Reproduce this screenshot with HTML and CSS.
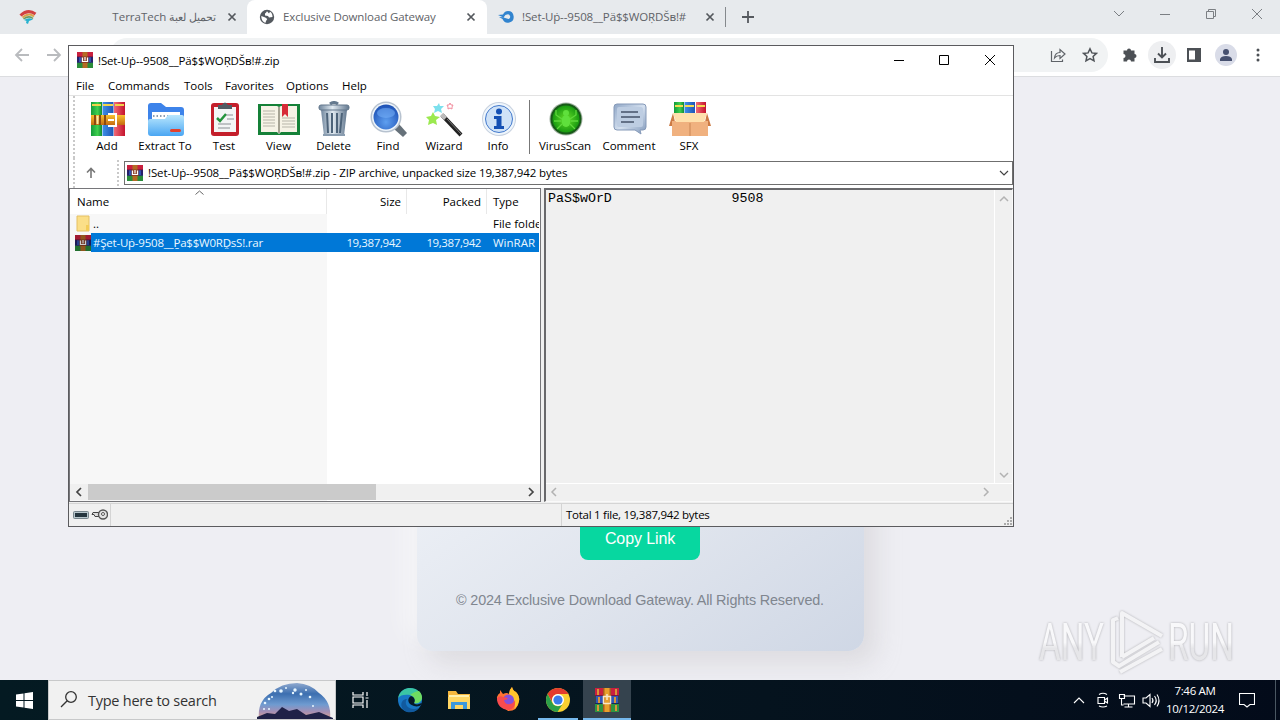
FILE: index.html
```html
<!DOCTYPE html>
<html lang="en">
<head>
    <meta charset="UTF-8">
    <title>Desktop</title>
    <link rel="stylesheet" href="styles.css">
</head>
<body>
    <!-- shared icons -->
    <svg class="defs" width="0" height="0">
        <defs>
            <linearGradient id="gold" x1="0" y1="0" x2="0" y2="1"><stop offset="0" stop-color="#f9c12f"/><stop offset="1" stop-color="#c56a12"/></linearGradient>
            <linearGradient id="folder" x1="0" y1="0" x2="0" y2="1"><stop offset="0" stop-color="#b9e7fd"/><stop offset="1" stop-color="#4aa6f3"/></linearGradient>
            <linearGradient id="steel" x1="0" y1="0" x2="1" y2="0"><stop offset="0" stop-color="#71879e"/><stop offset=".45" stop-color="#e2ebf2"/><stop offset="1" stop-color="#63788f"/></linearGradient>
            <linearGradient id="bubble" x1="0" y1="0" x2="1" y2="1"><stop offset="0" stop-color="#8fa6c6"/><stop offset=".5" stop-color="#d4e0ef"/><stop offset="1" stop-color="#8098ba"/></linearGradient>
            <radialGradient id="lens" cx=".5" cy=".7" r=".7"><stop offset="0" stop-color="#5fa0f0"/><stop offset="1" stop-color="#1b4fb4"/></radialGradient>
            <radialGradient id="green"><stop offset="0" stop-color="#67e02a"/><stop offset="1" stop-color="#189a10"/></radialGradient>
            <linearGradient id="red" x1="0" y1="0" x2="1" y2="0"><stop offset="0" stop-color="#f06a78"/><stop offset="1" stop-color="#c4132c"/></linearGradient>
            <linearGradient id="blue" x1="0" y1="0" x2="1" y2="0"><stop offset="0" stop-color="#3f8fe8"/><stop offset="1" stop-color="#1f55b5"/></linearGradient>
            <linearGradient id="leaf" x1="0" y1="0" x2="1" y2="0"><stop offset="0" stop-color="#139a3a"/><stop offset=".6" stop-color="#3fd04e"/><stop offset="1" stop-color="#138a33"/></linearGradient>
        </defs>
        <symbol id="books" viewBox="0 0 16 16">
            <path fill="#c9203f" d="M0 0h16v5H0z"/>
            <path fill="#2f50b0" d="M0 5h16v5.500H0z"/>
            <path fill="#2a8c3a" d="M0 10.500h16V16H0z"/>
            <path fill="#7a1740" d="M0 4.300h16v1H0z"/>
            <path fill="#182a63" d="M0 10h16v.8H0z"/>
            <path fill="#b46a24" d="M5.500 0h5v16h-5z"/>
            <path fill="#27206a" d="M0 5h2v5H0zM14 5h2v5h-2z"/>
            <path fill="#8b3d22" d="M4.500 4.500h7v6.500h-7z"/>
            <path fill="none" stroke="#fff" stroke-width="1.200" d="M5.500 5.500v4h5v-4M8 5v3.500"/>
        </symbol>
        <symbol id="books-large" viewBox="0 0 24 24">
            <path fill="#c9203f" d="M0 0h24v8H0z"/>
            <path fill="#3157b8" d="M1 8h22v8H1z"/>
            <path fill="#2f9440" d="M0 16h24v8H0z"/>
            <path fill="#7a1740" d="M0 7h24v1H0z"/>
            <path fill="#17265c" d="M0 15h24v1H0z"/>
            <path fill="#d9953a" d="M2 1h2v6H2zM20 1h2v6h-2zM3 9h2v6H3zM19 9h2v6h-2zM2 17h2v6H2zM20 17h2v6h-2z"/>
            <path fill="#a85a1e" d="M8 0h8v24H8z"/>
            <path fill="#e8a02c" d="M9.500 0h5v24h-5z"/>
            <path fill="none" stroke="#f6e6c8" stroke-width="1.500" d="M8.500 8.500h7v7h-7zM12 6v6"/>
        </symbol>
    </svg>

    <div class="desktop">
        <div class="browser">
            <div class="tabstrip">
                <div class="tab tab-first">
                    <svg width="18" height="16" viewBox="0 0 18 16"><path d="M1.500 6.500Q9-.5 16.500 5" fill="none" stroke="#d24141" stroke-width="3"/><path d="M3.500 8.500Q10 3 15 7.500" fill="none" stroke="#dda24a" stroke-width="2"/><path d="M4.500 10Q10 6 14 9.500" fill="none" stroke="#6b9a5c" stroke-width="1.500"/><path d="M5 11q5-3 9-.5L10 12l-1 3-2-1 .5-2z" fill="#27b2cf"/></svg>
                    <span class="tab-title" dir="rtl">تحميل لعبة <span class="latin">TerraTech</span></span>
                    <svg class="tab-close" width="10" height="10" viewBox="0 0 10 10"><path d="M1.500 1.500l7 7m0-7l-7 7"/></svg>
                </div>
                <div class="tab tab-active">
                    <svg width="16" height="16" viewBox="0 0 16 16"><circle cx="8" cy="8" r="7.200" fill="#54595f"/><path d="M2.300 7l4 1.500 2 1.500-1 1.500-1 2.500Q2 12 2.300 7zM8 2.300q-1 2-2 2.200v2l3 .5 1 1.500 3.500-.5Q13.500 4 11 2.800L10 4.500z" fill="#fff"/></svg>
                    <span class="tab-title">Exclusive Download Gateway</span>
                    <svg class="tab-close" width="10" height="10" viewBox="0 0 10 10"><path d="M1.500 1.500l7 7m0-7l-7 7"/></svg>
                </div>
                <div class="tab tab-third">
                    <svg width="16" height="16" viewBox="0 0 16 16"><path fill="#3184cf" fill-rule="evenodd" d="M0 6l5-.5C6 3 8 2 10 2a5.800 5.800 0 1 1-5.500 8L1 8l4 .2zM9 5.500q-2 .2-2.500 1.700L5.500 8.500l5 1.500a2.300 2.300 0 1 0-1.500-4.500z"/></svg>
                    <span class="tab-title">!Set-Uṗ--9508__Pä$$WOṚDŠʙ!#</span>
                    <svg class="tab-close" width="10" height="10" viewBox="0 0 10 10"><path d="M1.500 1.500l7 7m0-7l-7 7"/></svg>
                </div>
                <span class="tab-divider"></span>
                <svg class="new-tab" width="12" height="12" viewBox="0 0 12 12"><path d="M6 0v12M0 6h12" stroke="#55595e" stroke-width="1.800"/></svg>
                <div class="caption">
                    <svg width="12" height="12" viewBox="0 0 12 12"><path d="M1 3l5 5 5-5"/></svg>
                    <svg width="12" height="12" viewBox="0 0 12 12"><path d="M1 6.500h10"/></svg>
                    <svg width="12" height="12" viewBox="0 0 12 12"><path d="M1.500 3.500h7v7h-7zM3.500 3.500v-2h7v7h-2"/></svg>
                    <svg width="12" height="12" viewBox="0 0 12 12"><path d="M1 1l10 10M11 1L1 11"/></svg>
                </div>
            </div>
            <div class="nav">
                <svg class="arrow" width="16" height="16" viewBox="0 0 16 16"><path d="M15 8H2M8 2L2 8l6 6"/></svg>
                <svg class="arrow" width="16" height="16" viewBox="0 0 16 16"><path d="M1 8h13M8 2l6 6-6 6"/></svg>
                <div class="omnibox">
                    <svg width="16" height="16" viewBox="0 0 16 16"><path d="M1.500 4v10.500h11v-2M4.500 11q.5-5.500 5.500-5.500v-3L15 7l-5 4.500V8.500Q6.500 8.500 4.500 11z" fill="none" stroke="#5f6368" stroke-width="1.200"/></svg>
                    <svg width="16" height="16" viewBox="0 0 16 16"><path d="M8 1.800l1.900 4.100 4.500.5-3.300 3 .9 4.400L8 11.600l-4 2.200.9-4.400-3.300-3 4.500-.5z" fill="none" stroke="#505459" stroke-width="1.500"/></svg>
                </div>
                <div class="nav-icons">
                    <svg width="16" height="16" viewBox="0 0 16 16"><path fill="#4c5055" d="M1.500 3.500H5a2 2 0 1 1 4 0h3.500V7a2 2 0 1 1 0 4v3.500H9a2 2 0 0 0-4 0H1.500V11a2 2 0 0 0 0-4z"/></svg>
                    <span class="round"><svg width="18" height="18" viewBox="0 0 18 18"><path d="M9 1v10M5 7.500l4 4 4-4M2 12v4h14v-4" fill="none" stroke="#4c5055" stroke-width="1.900"/></svg></span>
                    <svg width="14" height="14" viewBox="0 0 14 14"><path fill="#4c5055" fill-rule="evenodd" d="M0 0h14v14H0zM2 2.500v9h6v-9z"/></svg>
                    <span class="round avatar"><svg width="14" height="14" viewBox="0 0 14 14"><circle cx="7" cy="4" r="3" fill="#46506f"/><path fill="#46506f" d="M1 13v-2q1-3 6-3t6 3v2z"/></svg></span>
                    <svg width="4" height="14" viewBox="0 0 4 14"><g fill="#4c5055"><circle cx="2" cy="2" r="1.500"/><circle cx="2" cy="7" r="1.500"/><circle cx="2" cy="12" r="1.500"/></g></svg>
                </div>
            </div>
            <div class="page">
                <div class="card">
                    <span class="copy-btn">Copy Link</span>
                    <p class="copyright">© 2024 Exclusive Download Gateway. All Rights Reserved.</p>
                </div>
            </div>
        </div>

        <div class="taskbar">
            <div class="start"><svg width="17" height="17" viewBox="0 0 17 17"><path fill="#fff" d="M0 2.500l7.500-1V8H0zM8.500 1.300L17 0v8H8.500zM0 9h7.500v6.500l-7.500-1zM8.500 9H17v8l-8.500-1.300z"/></svg></div>
            <div class="search">
                <svg width="20" height="20" viewBox="0 0 20 20"><circle cx="12" cy="7" r="5.300" fill="none" stroke="#333" stroke-width="1.300"/><path d="M8.200 10.800L2 17" stroke="#333" stroke-width="1.300"/></svg>
                <span>Type here to search</span>
                <svg class="scene" width="78" height="38" viewBox="0 0 78 38">
                    <defs>
                        <linearGradient id="night" x1="0" y1="0" x2="0" y2="1"><stop offset="0" stop-color="#8fa9cf"/><stop offset=".3" stop-color="#3c6fb0"/><stop offset=".6" stop-color="#6f9bd0"/><stop offset=".8" stop-color="#a58fb4"/><stop offset="1" stop-color="#e2a58c"/></linearGradient>
                    </defs>
                    <path d="M2 38Q0 20 14 12 24 2 40 2q14 1 22 10 13 9 11 26z" fill="url(#night)"/>
                    <path d="M0 36l10-4 8 1 7-7 7 4 8-2 9 6 13-3 14 6v1H0z" fill="#1f2147"/>
                    <g fill="#e8f7ff"><circle cx="18" cy="10" r="1.300"/><circle cx="24" cy="10" r="1.800"/><circle cx="29" cy="7" r="1"/><circle cx="36" cy="12" r="1.200"/><circle cx="38" cy="9" r="1.700"/><circle cx="44" cy="13" r="1.500"/><circle cx="49" cy="9" r="1"/><circle cx="53" cy="16" r="1.300"/><circle cx="12" cy="18" r="1.300"/><circle cx="8" cy="22" r="1.300"/><circle cx="15" cy="16" r="1"/><circle cx="7" cy="28" r="1"/><circle cx="12" cy="28" r="1"/><circle cx="56" cy="25" r="1"/></g>
                </svg>
            </div>
            <div class="task"><svg width="17" height="16" viewBox="0 0 17 16"><path d="M1 0v3h10V0M1 16v-3h10v3M1 5h10v6H1zM15 0v4M15 8v8M13.500 6h3" fill="none" stroke="#fff" stroke-width="1.200"/></svg></div>
            <div class="task"><svg width="26" height="26" viewBox="0 0 26 26"><circle cx="13" cy="13" r="12" fill="#1877c5"/><path d="M1 11C3 3 9 1 13 1c7 0 12 5 12 10 0 4-4 6-8 5 2-3 0-7-4-8-5-1-10 0-12 3z" fill="#3bc5a4"/><path d="M13 8c4 1 6 5 4 8 4 1 7-1 8-5 0-3-1-5-3-7 0 0-4 0-9 4z" fill="#6fdb61"/><path d="M10 12c-4 5 2 13 12 9-3 4-8 5-12 4C2 22 3 12 10 12z" fill="#115a9f"/><path d="M14 9c-4 2-4 8 3 10 3 1 6 0 7-1 2-2 0-2-2-1-2 1-5 0-5-1 2-3 0-6-3-7z" fill="#061928"/></svg></div>
            <div class="task"><svg width="22" height="20" viewBox="0 0 22 20"><path d="M0 1h8l2 3h12v15H0z" fill="#f5b73d"/><path d="M1 5h20v5H1z" fill="#fff0ad"/><path d="M0 7h22v12H0z" fill="#ffd663"/><path d="M3 19v-7h16v7h-4v-4H7v4z" fill="#3c98dc"/></svg></div>
            <div class="task"><svg width="24" height="25" viewBox="0 0 24 25"><path d="M4 3l3 4q4-2 6 0 0-4 3-7 1 4 4 5 4 4 3 9-1 10-11 10S0 17 1 10q1-3 3-4z" fill="#ff7332"/><path d="M16 0q1 4 4 5 4 4 3 9-1 5-5 8 2-5 0-9-3-4-5-6 0-4 3-7z" fill="#ffc52c"/><circle cx="12.500" cy="13" r="5.500" fill="#8451dc"/><path d="M1 11q3-3 6-1l5 1q-1 2-4 2 1 5 6 4 4-1 5-4 1 8-6 10Q1 22 1 11z" fill="#f94b4e"/></svg></div>
            <div class="task task-open"><svg width="26" height="26" viewBox="0 0 26 26"><circle cx="13" cy="13" r="12" fill="#f9cf30"/><path d="M2.600 7A12 12 0 0 1 23.400 7H13a6 6 0 0 0-5.500 8.500z" fill="#e33b2e"/><path d="M2.600 7A12 12 0 0 0 12.500 25l5.400-8.500a6 6 0 0 1-10.200 0z" fill="#2b9f49"/><circle cx="13" cy="13" r="6" fill="#fff"/><circle cx="13" cy="13" r="4.600" fill="#3a7ceb"/></svg></div>
            <div class="task task-open task-current"><svg width="24" height="24"><use href="#books-large"/></svg></div>
            <div class="tray">
                <svg width="12" height="12" viewBox="0 0 12 12"><path d="M1 9l5-5 5 5"/></svg>
                <svg width="14" height="16" viewBox="0 0 14 16"><path d="M2 5.500h6.500v6H2zM8.500 8l3-2v5l-3-2M3 2.500q4-2.500 8 0M3 14q4 2 8 0"/></svg>
                <svg width="17" height="15" viewBox="0 0 17 15"><path d="M5 3h11v8H5M10 11v3M6 14h8M1 1.500h5v4H1zM3 5.500V12h2"/></svg>
                <svg width="18" height="15" viewBox="0 0 18 15"><path d="M1 5h3l4-3.500v12L4 10H1zM10 5q2 2.500 0 5M12.500 3q3.500 4.500 0 9M15 1.500q4 6 0 12"/></svg>
                <div class="clock"><span>7:46 AM</span><span>10/12/2024</span></div>
                <svg class="note" width="16" height="16" viewBox="0 0 16 16"><path d="M.5 1.500h15v11H11L8 15l-3-2.500H.5z"/></svg>
                <span class="peek"></span>
            </div>
        </div>

        <svg class="watermark" width="215" height="74" viewBox="0 0 215 74">
            <defs>
                <linearGradient id="fade" x1="0" y1="0" x2="0" y2="1"><stop offset=".5" stop-color="#f8f8fa"/><stop offset=".6" stop-color="#e6e6e9"/></linearGradient>
            </defs>
            <g class="mark-text" fill="url(#fade)">
                <text x="4" y="54" textLength="65" lengthAdjust="spacingAndGlyphs">ANY</text>
                <text x="133" y="54" textLength="66" lengthAdjust="spacingAndGlyphs">RUN</text>
            </g>
            <path class="mark-line" d="M83 12l-5 2v42l6 4 40-24M87 51V7l40 23M87 51l32-19M85 66l42-23"/>
        </svg>

        <div class="window">
            <div class="titlebar">
                <svg width="16" height="16"><use href="#books"/></svg>
                <span class="window-title">!Set-Uṗ--9508__Pä$$WOṚDŠʙ!#.zip</span>
                <div class="controls">
                    <svg width="12" height="12" viewBox="0 0 12 12"><path d="M1 6.500h10"/></svg>
                    <svg width="12" height="12" viewBox="0 0 12 12"><path d="M1.500 1.500h9v9h-9z"/></svg>
                    <svg class="close" width="12" height="12" viewBox="0 0 12 12"><path d="M1 1l10 10M11 1L1 11"/></svg>
                </div>
            </div>
            <div class="menu">
                <span class="m-file">File</span><span class="m-commands">Commands</span><span class="m-tools">Tools</span><span class="m-fav">Favorites</span><span class="m-options">Options</span><span>Help</span>
            </div>
            <div class="toolbar">
                <div class="tool w58"><svg width="36" height="36" viewBox="0 0 36 36"><path d="M1 1h11v34H1z" fill="url(#leaf)"/><path d="M12.500 1h11v34h-11z" fill="url(#blue)"/><path d="M24 1h11v34H24z" fill="url(#red)"/><path d="M2 4h9M13 4h10M25 4h9" stroke="#f2d34a" stroke-width="2"/><path d="M1 14h34v10H1z" fill="url(#gold)"/><path d="M5 14v10M10 14v10M15 14v10" stroke="#8b4a10" stroke-width="2"/><path d="M7.500 15v8" stroke="#ffe9a8" stroke-width="2"/><path d="M18 13h8v12h-8" fill="none" stroke="#fff" stroke-width="2"/><path d="M18 19h6" stroke="#fff" stroke-width="2"/></svg><span>Add</span></div>
                <div class="tool w58"><svg width="38" height="36" viewBox="0 0 38 36"><path d="M1 5q0-3 3-3h10l5 4h15q3 0 3 3v20H1z" fill="#3d83ea"/><path d="M5 11h28v10H5z" fill="#fff"/><path d="M6 15h26" stroke="#8e9db0" stroke-width="2" stroke-dasharray="1.500 2"/><path d="M1 20q0-2 2-2h15l3-4h14q2 0 2 2v16q0 3-3 3H4q-3 0-3-3z" fill="url(#folder)"/><rect x="23" y="28" width="11" height="3" rx="1.500" fill="#e3402d"/></svg><span>Extract To</span></div>
                <div class="tool w60"><svg width="30" height="36" viewBox="0 0 30 36"><rect x="1" y="2" width="28" height="33" rx="3" fill="#c41f2b"/><path d="M4 6h22v25H4z" fill="#f4f5f5"/><path d="M8 8V4h4q3-5 6 0h4v4z" fill="#505b63"/><path d="M7 17l3 3 6-7" fill="none" stroke="#24943c" stroke-width="2.500"/><path d="M16 14h7M17 18h7M8 23h13M8 27h12" stroke="#8b9094"/></svg><span>Test</span></div>
                <div class="tool w49"><svg width="42" height="36" viewBox="0 0 42 36"><path d="M0 3h42v31H0z" fill="#158138"/><path d="M3 5h16l2 1 2-1h16v26H23l-2 2-2-2H3z" fill="#f6f3e6"/><path d="M21 6v26" stroke="#a5a292" stroke-width="2"/><path d="M5 10h12M5 13h12M5 16h12M5 19h12M5 22h12M5 25h12M24 17h13M24 20h13M24 23h13M24 26h13" stroke="#b7b5a9"/><path d="M24 3h6v13l-3-3-3 3z" fill="#d72b38"/></svg><span>View</span></div>
                <div class="tool w61"><svg width="32" height="36" viewBox="0 0 32 36"><path d="M12 3q4-3 8 0" fill="none" stroke="#657a8f" stroke-width="3"/><path d="M3 9h26l-3 26H6z" fill="url(#steel)"/><path d="M9 12l1 20M14 12v20M19 12v20M24 12l-2 20" stroke="#4d6379" stroke-width="2"/><rect x="1" y="4" width="30" height="5" rx="2" fill="url(#steel)" stroke="#62778b"/><path d="M5 34h22" stroke="#8a9db0" stroke-width="2"/></svg><span>Delete</span></div>
                <div class="tool w48"><svg width="37" height="36" viewBox="0 0 37 36"><path d="M25 24l4-1 8 9-4 4-9-8z" fill="#66717a"/><circle cx="16" cy="16" r="15.500" fill="#b7c2cf"/><circle cx="16" cy="16" r="14" fill="#eef5fb"/><circle cx="16" cy="16" r="12.500" fill="url(#lens)"/><ellipse cx="16" cy="12" rx="9" ry="5" fill="#78b3fa" opacity=".55"/></svg><span>Find</span></div>
                <div class="tool w64"><svg width="37" height="36" viewBox="0 0 37 36"><path d="M16 14l19 20" stroke="#222" stroke-width="4"/><path d="M15.500 13.500l4 4" stroke="#bcbcbc" stroke-width="4"/><path d="M21 18l14 15" stroke="#777"/><path d="M7 11l2 4 5 1-4 3 1 5-4-2-5 2 1-5-3-3 5-1z" fill="#9be94f"/><path d="M13 2l1 3 4 0-3 3 1 4-4-2-4 2 1-4-2-3 4 0z" fill="#7ce0ed"/><path d="M24 2l1 2h2l-1 2v2l-2-1-2 1V6l-1-2h2z" fill="none" stroke="#f18c9d"/></svg><span>Wizard</span></div>
                <div class="tool w44"><svg width="36" height="36" viewBox="0 0 36 36"><circle cx="18" cy="18" r="17" fill="#c7d1df"/><circle cx="18" cy="18" r="16" fill="#eff6fc"/><circle cx="18" cy="18" r="13.500" fill="#cfe2f7" stroke="#4379cc"/><circle cx="18" cy="10.500" r="3" fill="#1450b4"/><path d="M13 15h7.500v10H23v3H13v-3h2.500v-7H13z" fill="#1450b4"/></svg><span>Info</span></div>
                <span class="tool-sep"></span>
                <div class="tool w60"><svg width="34" height="36" viewBox="0 0 34 36"><circle cx="17" cy="18" r="16.500" fill="#a1b0a2"/><circle cx="17" cy="18" r="15.500" fill="#185a18"/><circle cx="17" cy="18" r="13.500" fill="url(#green)"/><g fill="#5fe03c"><ellipse cx="17" cy="20" rx="4.500" ry="6"/><circle cx="17" cy="12" r="3"/></g><path d="M13 18l-6-4V9M21 18l6-4V9M12 20H5M22 20h7M13 23l-5 5M21 23l5 5" fill="none" stroke="#5fd83c" stroke-width="1.300"/></svg><span>VirusScan</span></div>
                <div class="tool w68"><svg width="34" height="36" viewBox="0 0 34 36"><path d="M4 3h26q3 0 3 3v20q0 3-3 3h-3l1 4-6-4H4q-3 0-3-3V6q0-3 3-3z" fill="url(#bubble)" stroke="#8599b8"/><rect x="4" y="6" width="26" height="20" rx="2" fill="#bdcde2"/><path d="M8 11h17M8 16h19M8 21h13" stroke="#45536a" stroke-width="1.600"/></svg><span>Comment</span></div>
                <div class="tool w52"><svg width="42" height="36" viewBox="0 0 42 36"><path d="M5 1h10v14H5z" fill="url(#leaf)"/><path d="M15.500 1h10.500v14H15.500z" fill="url(#blue)"/><path d="M27 1h10v14H27z" fill="url(#red)"/><path d="M6 5h8M16 5h9M28 5h8" stroke="#f6db4f" stroke-width="2"/><path d="M4 12L0 25h42l-4-13-2 9H6z" fill="#cc7b45"/><path d="M3 20h36v15H3z" fill="#f0b17f"/><path d="M4 12h34l-3 9H7z" fill="#ffe0ac"/><path d="M21 22v13" stroke="#c98555"/></svg><span>SFX</span></div>
            </div>
            <div class="addressbar">
                <svg class="up" width="10" height="11" viewBox="0 0 10 11"><path d="M5 11V1.500M1 5.500l4-4 4 4" fill="none" stroke="#777" stroke-width="1.600"/></svg>
                <span class="dots"></span>
                <div class="address">
                    <svg width="16" height="16"><use href="#books"/></svg>
                    <span class="address-text">!Set-Uṗ--9508__Pä$$WOṚDŠʙ!#.zip - ZIP archive, unpacked size 19,387,942 bytes</span>
                    <svg class="drop" width="10" height="8" viewBox="0 0 10 8"><path d="M1 2l4 4 4-4" fill="none" stroke="#444" stroke-width="1.200"/></svg>
                </div>
            </div>
            <div class="panes">
                <div class="list">
                    <div class="row head">
                        <span class="c-name">Name</span><span class="c-size">Size</span><span class="c-packed">Packed</span><span class="c-type">Type</span>
                        <svg class="sort" width="9" height="5" viewBox="0 0 9 5"><path d="M.5 4.500l4-3.500 4 3.500" fill="none" stroke="#666"/></svg>
                    </div>
                    <div class="row">
                        <span class="c-name"><svg class="file-icon" width="16" height="17" viewBox="0 0 16 17"><path d="M2 1h12v15H2z" fill="#fbdf88" stroke="#e5c063"/><path d="M11 10h3v6h-3z" fill="#f3cc58"/></svg><span class="parent">..</span></span><span class="c-size"></span><span class="c-packed"></span><span class="c-type">File folde</span>
                    </div>
                    <div class="row selected">
                        <span class="c-name"><svg class="file-icon tinted" width="16" height="16"><use href="#books"/></svg><span class="file-name">#Şet-Uṗ-9508__P̱a$$W0RḒsS!.rar</span></span><span class="c-size number">19,387,942</span><span class="c-packed number">19,387,942</span><span class="c-type">WinRAR</span>
                    </div>
                    <div class="fill"></div>
                    <div class="hscroll">
                        <svg width="8" height="10" viewBox="0 0 8 10"><path d="M6 1L2 5l4 4"/></svg>
                        <span class="thumb"></span>
                        <svg class="right" width="8" height="10" viewBox="0 0 8 10"><path d="M2 1l4 4-4 4"/></svg>
                    </div>
                </div>
                <div class="comment">
                    <div class="comment-main">
                        <pre>PaS$wOrD               9508</pre>
                        <div class="vscroll">
                            <svg width="10" height="8" viewBox="0 0 10 8"><path d="M1 6l4-4 4 4"/></svg>
                            <svg width="10" height="8" viewBox="0 0 10 8"><path d="M1 2l4 4 4-4"/></svg>
                        </div>
                    </div>
                    <div class="hscroll light">
                        <svg width="8" height="10" viewBox="0 0 8 10"><path d="M6 1L2 5l4 4"/></svg>
                        <svg class="right" width="8" height="10" viewBox="0 0 8 10"><path d="M2 1l4 4-4 4"/></svg>
                    </div>
                </div>
            </div>
            <div class="status">
                <div class="status-icons">
                    <svg width="16" height="8" viewBox="0 0 16 8"><rect x=".5" y=".5" width="15" height="7" rx="1" fill="#b8c6cc" stroke="#78868d"/><path d="M2 2h12v4H2z" fill="#26363f"/></svg>
                    <svg width="17" height="11" viewBox="0 0 17 11"><path d="M10 3.500H2L1 5.500h2l1 2h6" fill="#ddd" stroke="#444"/><circle cx="12" cy="5.500" r="4.500" fill="#e4e4e4" stroke="#555" stroke-width="1.400"/><circle cx="12" cy="5" r="1.500" fill="#fff" stroke="#555"/></svg>
                </div>
                <span class="total">Total 1 file, 19,387,942 bytes</span>
                <svg class="grip" width="10" height="10" viewBox="0 0 10 10"><path fill="#aaa" d="M7 1h2v2H7zM4 4h2v2H4zM7 4h2v2H7zM1 7h2v2H1zM4 7h2v2H4zM7 7h2v2H7z"/></svg>
            </div>
        </div>
    </div>
</body>
</html>
```
FILE: styles.css
```css
* {
    box-sizing: border-box;
}
body {
    margin: 0;
    font-family: "Open Sans", "Noto Sans", sans-serif;
    font-size: 11.5px;
    color: #000;
}
svg {
    flex: none;
    display: block;
}
.defs {
    position: absolute;
}
.desktop {
    position: relative;
    display: flex;
    flex-direction: column;
    width: 1280px;
    height: 720px;
    overflow: hidden;
}
/* browser */
.browser {
    display: flex;
    flex-direction: column;
    height: 680px;
}
.tabstrip {
    display: flex;
    align-items: center;
    height: 34px;
    background: #e7eaed;
    color: #5f6368;
}
.tab {
    display: flex;
    align-items: center;
    height: 34px;
    padding-bottom: 1px;
    white-space: nowrap;
    letter-spacing: -.1px;
}
.tab-first {
    width: 247px;
    padding-left: 19px;
    padding-right: 10px;
}
.tab-first .tab-title {
    margin-left: auto;
    margin-right: 11px;
    letter-spacing: 0;
    font-size: 11px;
}
.latin {
    font-size: 11.5px;
}
.tab-active {
    width: 240px;
    padding-left: 12px;
    padding-right: 11px;
    background: #fff;
    border-radius: 8px 8px 0 0;
}
.tab-active .tab-title {
    margin-left: 8px;
    margin-right: auto;
}
.tab-third {
    width: 238px;
    padding-left: 11px;
    padding-right: 10px;
}
.tab-third .tab-title {
    margin-left: 8px;
    margin-right: auto;
    letter-spacing: -.13px;
}
.tab-close path {
    stroke: #54585d;
    stroke-width: 1.7;
}
.tab-divider {
    width: 1px;
    height: 20px;
    background: #85898d;
}
.new-tab {
    margin-left: 16px;
}
.caption {
    display: flex;
    gap: 34px;
    margin-left: auto;
    margin-right: 17px;
    padding-bottom: 6px;
}
.caption path {
    fill: none;
    stroke: #7b7f83;
}
.nav {
    display: flex;
    align-items: center;
    height: 43px;
    padding-left: 14px;
    background: #fff;
    border-bottom: 1px solid #dcdde0;
}
.arrow {
    margin-right: 16px;
}
.arrow path {
    fill: none;
    stroke: #b9bbbe;
    stroke-width: 1.8;
}
.omnibox {
    display: flex;
    align-items: center;
    justify-content: flex-end;
    gap: 16px;
    width: 998px;
    height: 34px;
    margin-left: 32px;
    padding-right: 10px;
    background: #f1f3f4;
    border-radius: 17px;
}
.nav-icons {
    display: flex;
    align-items: center;
    margin-left: 14px;
}
.round {
    display: flex;
    align-items: center;
    justify-content: center;
    width: 28px;
    height: 28px;
    margin: 0 11px 0 10px;
    border-radius: 50%;
    background: #eeeff1;
}
.avatar {
    width: 22px;
    height: 22px;
    margin: 0 19px 0 14px;
    background: #d9dce8;
}
.page {
    display: flex;
    flex: 1;
    justify-content: center;
    align-items: flex-end;
    padding-bottom: 29px;
    background: #eeeef3;
}
.card {
    display: flex;
    flex-direction: column;
    align-items: center;
    justify-content: flex-end;
    width: 447px;
    height: 480px;
    border-radius: 16px;
    background: linear-gradient(145deg, #f1f4f9 30%, #dfe4ed 70%, #cfd7e5);
    box-shadow: 12px 12px 24px rgba(190, 185, 190, .35), -12px -12px 24px rgba(255, 255, 255, .55);
}
.copy-btn {
    width: 120px;
    height: 45px;
    padding-top: 15px;
    border-radius: 8px;
    background: #07d7a0;
    color: #fff;
    text-align: center;
    font: 16px/18px "Liberation Sans", Arial, sans-serif;
    letter-spacing: -.1px;
}
.copyright {
    margin: 32px 0 42px;
    color: #80868f;
    font: 14.4px/17px "Liberation Sans", Arial, sans-serif;
    letter-spacing: -.16px;
    white-space: nowrap;
}
/* taskbar */
.taskbar {
    display: flex;
    height: 40px;
    background: linear-gradient(90deg, #041a22, #05131e 60%, #030b1a);
    color: #fff;
}
.start {
    display: flex;
    align-items: center;
    width: 48px;
    padding-left: 16px;
}
.search {
    display: flex;
    align-items: center;
    width: 288px;
    padding-left: 10px;
    border: 1px solid #c8c9ca;
    background: #f1f1f1;
    color: #333;
    font-size: 14.5px;
    white-space: nowrap;
    letter-spacing: -.25px;
}
.search span {
    margin-left: 9px;
}
.scene {
    margin-left: auto;
}
.task {
    display: flex;
    align-items: center;
    justify-content: center;
    width: 49px;
    padding-top: 1px;
    border-bottom: 2px solid transparent;
}
.task-open {
    width: 40px;
    margin: 0 5px 0 6px;
    border-bottom-color: #76b9ed;
}
.task-current {
    width: 48px;
    margin: 0;
    background: #35434e;
}
.tray {
    display: flex;
    align-items: center;
    margin-left: auto;
}
.tray svg {
    width: 24px;
}
.tray path {
    fill: none;
    stroke: #fff;
    stroke-width: 1.1;
}
.clock {
    display: flex;
    flex-direction: column;
    width: 62px;
    margin-left: 1px;
    text-align: center;
    font-size: 11.5px;
    line-height: 18px;
    letter-spacing: -.3px;
}
.tray .note {
    width: 16px;
    margin-left: 13px;
}
.peek {
    width: 5px;
    height: 40px;
    margin-left: 20px;
    border-left: 1px solid #4a5762;
}
.watermark {
    position: absolute;
    left: 1035px;
    top: 606px;
    filter: drop-shadow(0 0 1px #aeaeb2);
}
.mark-text {
    font: 51px Roboto, sans-serif;
}
.mark-line {
    fill: none;
    stroke: #f3f3f5;
    stroke-width: 4;
    stroke-linejoin: round;
}
/* archive window */
.window {
    position: absolute;
    left: 68px;
    top: 45px;
    display: flex;
    flex-direction: column;
    width: 946px;
    height: 482px;
    border: 1px solid #5b5b5e;
    background: #f0f0f0;
    white-space: nowrap;
}
.titlebar {
    display: flex;
    align-items: center;
    height: 30px;
    padding: 0 17px 2px 8px;
    background: #fff;
}
.window-title {
    margin-left: 5px;
    letter-spacing: -.15px;
}
.controls {
    display: flex;
    gap: 33px;
    margin-left: auto;
}
.controls .close {
    margin-left: 1px;
}
.controls path {
    fill: none;
    stroke: #000;
}
.menu {
    display: flex;
    height: 20px;
    padding-left: 7px;
    background: #fff;
    border-bottom: 1px solid #e3e3e3;
    line-height: 20px;
}
.m-file {
    width: 32px;
}
.m-commands {
    width: 76px;
}
.m-tools {
    width: 41px;
}
.m-fav {
    width: 61px;
}
.m-options {
    width: 56px;
}
.toolbar {
    display: flex;
    height: 62px;
    padding: 5px 0 0 3px;
    margin-left: 4px;
    background: #fff;
    border-left: 2px dotted #c9c9c9;
    box-shadow: -4px 0 #fff;
}
.tool {
    display: flex;
    flex-direction: column;
    align-items: center;
    line-height: 18px;
}
.tool svg {
    margin-left: 1px;
}
.w44 { width: 44px; }
.w48 { width: 48px; }
.w49 { width: 49px; }
.w52 { width: 52px; }
.w58 { width: 58px; }
.w60 { width: 60px; }
.w61 { width: 61px; }
.w64 { width: 64px; }
.w68 { width: 68px; }
.tool-sep {
    width: 1px;
    height: 54px;
    margin: -1px 5px 0 9px;
    background: #777;
}
.addressbar {
    display: flex;
    align-items: center;
    height: 30px;
    padding-bottom: 1px;
    margin-left: 4px;
    border-left: 2px dotted #c9c9c9;
    background: #fff;
    box-shadow: -4px 0 #fff;
}
.up {
    margin-left: 11px;
}
.dots {
    height: 26px;
    margin: 0 5px 0 21px;
    border-left: 2px dotted #c9c9c9;
}
.address {
    display: flex;
    flex: 1;
    align-items: center;
    height: 24px;
    padding: 0 3px 0 2px;
    border: 1px solid #6f6f6f;
}
.address-text {
    margin-left: 5px;
    letter-spacing: -.13px;
}
.drop {
    margin-left: auto;
}
.panes {
    display: flex;
    gap: 3px;
    height: 314px;
}
.list {
    display: flex;
    flex-direction: column;
    width: 472px;
    border: 1px solid #76767a;
    background: linear-gradient(90deg, #f7f7f7 257px, #fff 257px);
}
.row {
    display: flex;
    height: 19px;
    margin-right: 1px;
    line-height: 19px;
    overflow: hidden;
}
.row.head {
    position: relative;
    height: 25px;
    margin: 0;
    background: #fff;
    line-height: 25px;
}
.sort {
    position: absolute;
    left: 125px;
    top: 1px;
}
.c-name {
    display: flex;
    flex: none;
    align-items: center;
    width: 257px;
    padding-left: 5px;
}
.head .c-name {
    padding-left: 7px;
}
.c-size, .c-packed {
    flex: none;
    width: 80px;
    padding-right: 5px;
    text-align: right;
}
.number {
    padding-right: 6px;
    letter-spacing: -.4px;
}
.c-type {
    flex: none;
    padding-left: 6px;
}
.head .c-name, .head .c-size, .head .c-packed {
    border-right: 1px solid #e8e8e8;
}
.parent {
    margin-left: 2px;
}
.selected {
    background: linear-gradient(90deg, transparent 21px, #0078d7 21px);
    color: #e9f7ff;
}
.tinted {
    filter: brightness(.8);
}
.file-name {
    margin-left: 2px;
    letter-spacing: -.22px;
}
.fill {
    flex: 1;
}
.hscroll {
    display: flex;
    align-items: center;
    height: 16px;
    margin-bottom: 1px;
    padding: 0 5px;
    background: #f0f0f0;
}
.hscroll path {
    fill: none;
    stroke: #444;
    stroke-width: 1.7;
}
.hscroll .right {
    margin-left: auto;
}
.thumb {
    width: 288px;
    height: 16px;
    margin-left: 5px;
    background: #cbcbcb;
}
.comment {
    display: flex;
    flex-direction: column;
    width: 469px;
    border: 1px solid #fafafa;
    border-top: 2px solid #69696c;
    border-left: 2px solid #69696c;
    background: #f0f0f0;
}
.comment-main {
    display: flex;
    flex: 1;
    justify-content: space-between;
}
.comment pre {
    margin: 0 0 0 2px;
    font: 13.3px/18px "Liberation Mono", "Courier New", monospace;
}
.vscroll {
    display: flex;
    flex-direction: column;
    justify-content: space-between;
    width: 18px;
    padding: 5px 3px 4px 4px;
    border-left: 1px solid #fff;
}
.vscroll path, .light path {
    fill: none;
    stroke: #b2b2b2;
    stroke-width: 1.5;
}
.hscroll.light {
    height: 17px;
    padding: 0 22px 0 4px;
    border-top: 1px solid #fff;
}
.status {
    display: flex;
    align-items: center;
    flex: 1;
    margin-top: 1px;
    border-top: 1px solid #d5d5d5;
}
.status-icons {
    display: flex;
    align-items: center;
    gap: 2px;
    width: 42px;
    height: 22px;
    padding: 0 0 1px 4px;
    border-right: 1px solid #d4d4d4;
}
.total {
    height: 22px;
    margin-left: 450px;
    padding-left: 4px;
    border-left: 1px solid #d4d4d4;
    line-height: 22px;
    letter-spacing: -.27px;
}
.grip {
    margin-left: auto;
    align-self: flex-end;
}
```
